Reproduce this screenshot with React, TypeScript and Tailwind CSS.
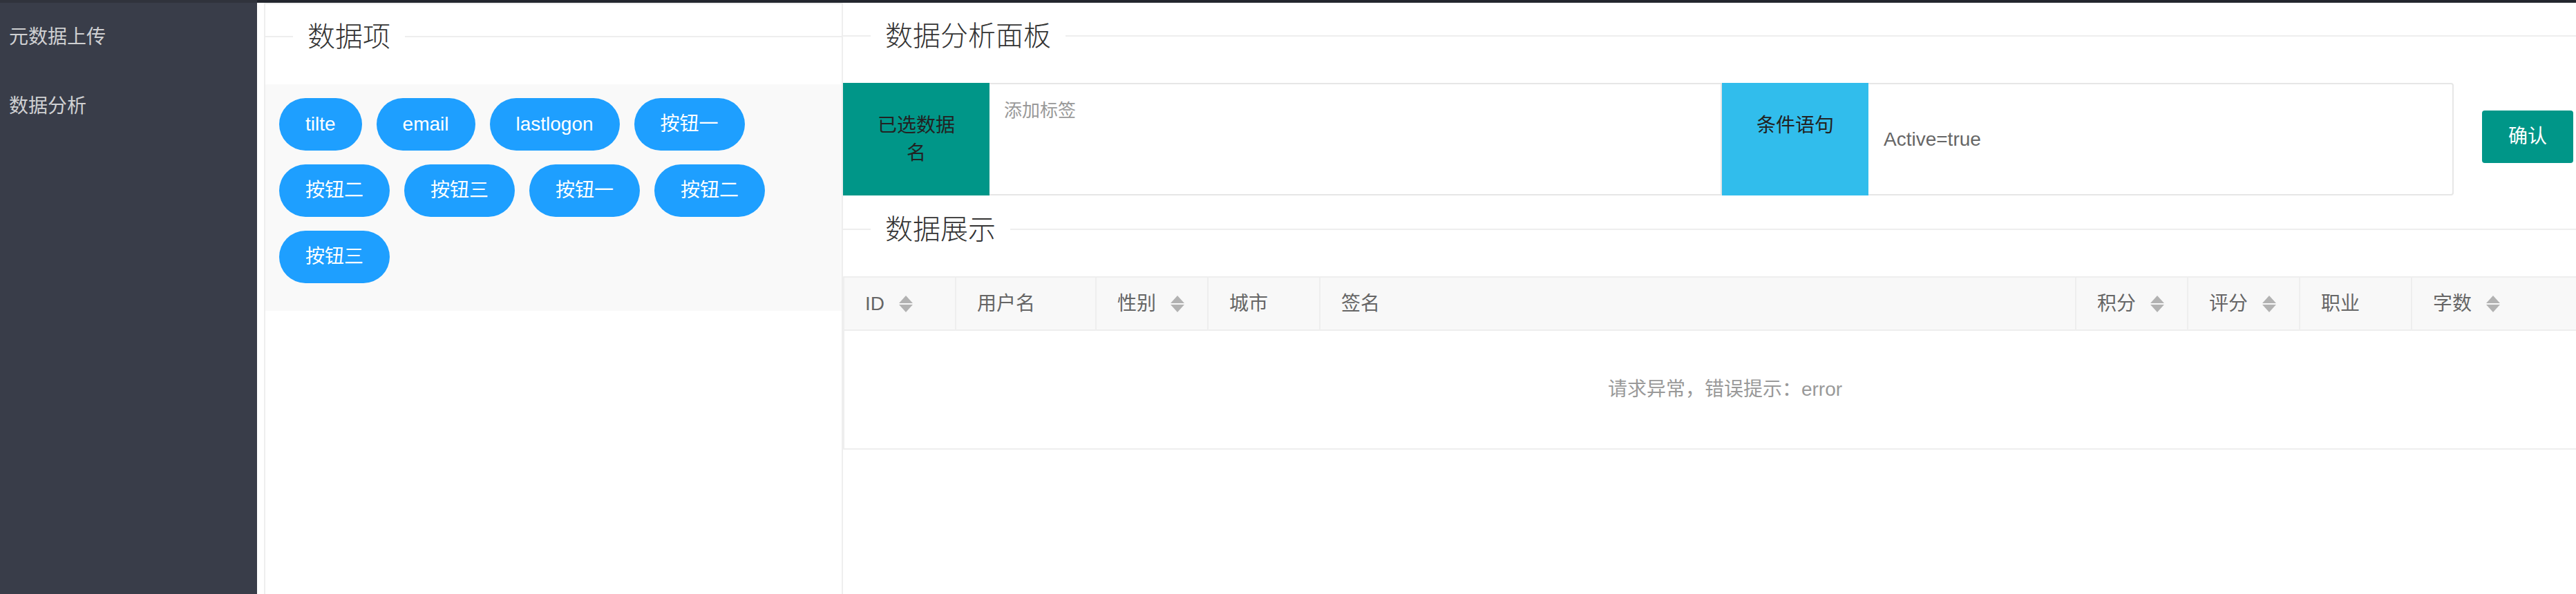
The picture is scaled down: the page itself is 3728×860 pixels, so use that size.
const pills = ["tilte", "email", "lastlogon", "按钮一", "按钮二", "按钮三", "按钮一", "按钮二", "按钮三"]

const columns = [
  { name: "ID", w: "w-[160px]", sort: true, first: true },
  { name: "用户名", w: "w-[203px]", sort: false },
  { name: "性别", w: "w-[162px]", sort: true },
  { name: "城市", w: "w-[162px]", sort: false },
  { name: "签名", w: "w-[1094px]", sort: false },
  { name: "积分", w: "w-[162px]", sort: true },
  { name: "评分", w: "w-[162px]", sort: true },
  { name: "职业", w: "w-[162px]", sort: false },
  { name: "字数", w: "w-[280px]", sort: true },
]

function Legend({ title }: { title: string }) {
  return (
    <div className="flex items-center h-[48px]">
      <div className="w-[40px] h-[2px] bg-[#eeeeee]" />
      <span className="px-[21px] text-[40px] leading-[48px] text-[#333] font-light">{title}</span>
      <div className="flex-1 h-[2px] bg-[#eeeeee]" />
    </div>
  )
}

function SortIcon() {
  return (
    <svg width="20" height="24" viewBox="0 0 20 24">
      <path d="M10 0 L20 11 H0 Z" fill="#b2b2b2" />
      <path d="M0 13 H20 L10 24 Z" fill="#b2b2b2" />
    </svg>
  )
}

export default function App() {
  return (
    <div className="flex h-screen w-full overflow-hidden bg-white font-['Liberation_Sans','Noto_Sans_CJK_SC',sans-serif]">
      {/* side menu */}
      <aside className="w-[372px] shrink-0 bg-[#393d49] flex flex-col">
        <div className="h-[4px] bg-[#30333c]" />
        <div className="h-[100px] leading-[100px] pl-[13px] text-[28px] text-[#cfd0d2]">元数据上传</div>
        <div className="h-[100px] leading-[100px] pl-[13px] text-[28px] text-[#cfd0d2]">数据分析</div>
      </aside>

      <main className="flex-1 min-w-0 flex flex-col">
        <div className="h-[4px] bg-[#23262e]" />
        <div className="flex-1 flex pl-[10px] min-h-0">
          {/* data items */}
          <section className="w-[838px] shrink-0 border-l-2 border-r-2 border-t-2 border-[#eeeeee] pt-[23px]">
            <Legend title="数据项" />
            <div className="mt-[45px] bg-[#f9f9f9] pt-[20px] pb-[40px] pl-[20px] pr-[10px] flex flex-wrap gap-x-[21px] gap-y-[20px]">
              {pills.map((p, i) => (
                <button key={i} className="h-[76px] px-[38px] rounded-full bg-[#1e9fff] text-white text-[28px] leading-[76px]">
                  {p}
                </button>
              ))}
            </div>
          </section>

          {/* analysis panel */}
          <section className="flex-1 min-w-0 pt-[24px] flex flex-col">
            <Legend title="数据分析面板" />
            <div className="mt-[44px] flex">
              <div className="flex-1 flex h-[163px]">
                <div className="w-[212px] shrink-0 bg-[#009688] px-[46px] pt-[42px] text-center text-[28px] leading-[40px] text-[#222]">
                  已选数据名
                </div>
                <div className="w-[1060px] shrink-0 border-y-2 border-r-2 border-[#e6e6e6]">
                  <textarea
                    placeholder="添加标签"
                    className="w-full h-full resize-none outline-none pl-[21px] pt-[20px] text-[26px] leading-[36px] text-[#333] placeholder:text-[#999] font-['Liberation_Sans','Noto_Sans_CJK_SC',sans-serif]"
                  />
                </div>
                <div className="w-[212px] shrink-0 bg-[#31bdec] pt-[42px] text-center text-[28px] leading-[40px] text-[#222]">
                  条件语句
                </div>
                <div className="flex-1 flex items-center pl-[22px] border-y-2 border-r-2 rounded-r-[4px] border-[#e6e6e6] text-[28px] text-[#666]">
                  Active=true
                </div>
              </div>
              <button className="ml-[41px] mr-[4px] mt-[40px] self-start w-[132px] h-[76px] rounded-[4px] bg-[#009688] text-white text-[28px]">
                确认
              </button>
            </div>

            <div className="mt-[25px]">
              <Legend title="数据展示" />
            </div>

            <div className="mt-[44px] overflow-hidden">
              <div className="w-[2551px]">
                <div className="flex h-[79px] bg-[#f8f8f8] border-y-2 border-l-2 border-[#eeeeee]">
                  {columns.map((c) => (
                    <div
                      key={c.name}
                      className={`${c.w} shrink-0 flex items-center gap-[21px] pl-[30px] text-[28px] text-[#666] ${c.first ? "" : "border-l-2 border-[#eeeeee]"}`}
                    >
                      <span>{c.name}</span>
                      {c.sort && <SortIcon />}
                    </div>
                  ))}
                </div>
                <div className="h-[172px] flex items-center justify-center border-b-2 border-l-2 border-[#eeeeee] text-[28px] text-[#999]">
                  请求异常，错误提示：error
                </div>
              </div>
            </div>
          </section>
        </div>
      </main>
    </div>
  )
}
